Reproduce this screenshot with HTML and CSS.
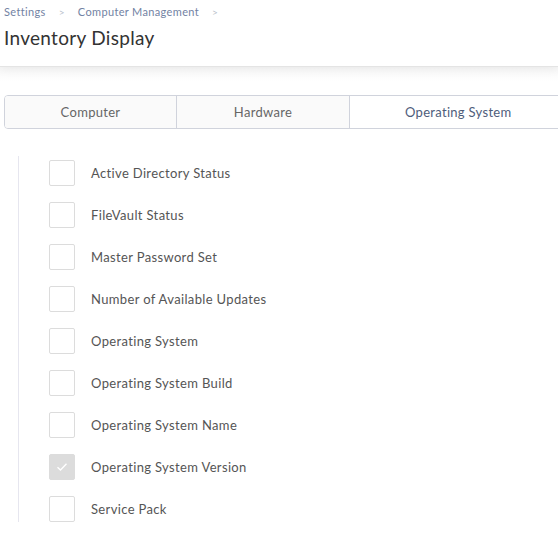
FILE: index.html
```html
<!DOCTYPE html>
<html>
<head>
<meta charset="utf-8">
<link rel="stylesheet" href="styles.css">
</head>
<body>
<header class="page-header">
  <nav class="crumbs">
    <span class="crumb">Settings</span>
    <span class="sep">&gt;</span>
    <span class="crumb">Computer Management</span>
    <span class="sep">&gt;</span>
  </nav>
  <h1 class="title">Inventory Display</h1>
</header>
<main class="content">
  <div class="tabs">
    <div class="tab">Computer</div>
    <div class="tab">Hardware</div>
    <div class="tab active">Operating System</div>
  </div>
  <ul class="list">
    <li class="row"><span class="box"></span><span class="label">Active Directory Status</span></li>
    <li class="row"><span class="box"></span><span class="label">FileVault Status</span></li>
    <li class="row"><span class="box"></span><span class="label">Master Password Set</span></li>
    <li class="row"><span class="box"></span><span class="label">Number of Available Updates</span></li>
    <li class="row"><span class="box"></span><span class="label">Operating System</span></li>
    <li class="row"><span class="box"></span><span class="label">Operating System Build</span></li>
    <li class="row"><span class="box"></span><span class="label">Operating System Name</span></li>
    <li class="row"><span class="box checked"><svg width="12" height="10" viewBox="0 0 12 10"><path d="M1.5 5.2 L4.5 8 L10.5 1.8" fill="none" stroke="#fff" stroke-width="1.4"/></svg></span><span class="label">Operating System Version</span></li>
    <li class="row"><span class="box"></span><span class="label">Service Pack</span></li>
  </ul>
</main>
</body>
</html>
```
FILE: styles.css
```css
html, body {
  margin: 0;
  padding: 0;
  background: #fff;
  font-family: "Lato", "Open Sans", sans-serif;
  overflow: hidden;
}
.page-header {
  height: 67px;
  box-sizing: border-box;
  padding: 5px 4px 0;
  border-bottom: 1px solid #e4e4e4;
  box-shadow: 0 2px 10px rgba(0,0,0,0.06);
  position: relative;
  z-index: 1;
  background: #fff;
}
.crumbs {
  display: flex;
  align-items: center;
  font-size: 11px;
  line-height: 14px;
  color: #7282a3;
  letter-spacing: 0.35px;
}
.sep {
  color: #b8bfcc;
  margin: 0 13px 0 13px;
  font-size: 10px;
}
.title {
  margin: 7px 0 0;
  font-size: 19px;
  font-weight: 400;
  color: #333;
  line-height: 24px;
  letter-spacing: 0.3px;
}
.content {
  padding: 28px 0 24px 4px;
  background: linear-gradient(#f7f7f7, #fff 14px);
  overflow: hidden;
}
.tabs {
  display: flex;
  width: 600px;
  height: 34px;
  border: 1px solid #d0d3dc;
  border-radius: 4px;
  box-sizing: border-box;
  overflow: hidden;
}
.tab {
  width: 172px;
  flex: none;
  display: flex;
  align-items: center;
  justify-content: center;
  font-size: 13px;
  color: #666;
  background: #fafafa;
  border-right: 1px solid #d0d3dc;
  letter-spacing: 0.3px;
}
.tab:first-child {
  width: 171px;
}
.tab.active {
  flex: 1;
  background: #fff;
  color: #4e5d7b;
  border-right: none;
  justify-content: flex-start;
  padding-left: 55px;
}
.list {
  list-style: none;
  margin: 27px 0 0 14px;
  padding: 4px 0 0 30px;
  border-left: 1px solid #e6e6ef;
  width: 400px;
  box-sizing: border-box;
}
.row {
  display: flex;
  align-items: center;
  height: 26px;
  margin-bottom: 16px;
}
.row:last-child {
  margin-bottom: 0;
}
.box {
  width: 26px;
  height: 26px;
  box-sizing: border-box;
  border: 1px solid #dcdcdc;
  border-radius: 2px;
  background: #fff;
  display: flex;
  align-items: center;
  justify-content: center;
  flex: none;
}
.box.checked {
  background: #dcdcdc;
  border-color: #dcdcdc;
}
.label {
  margin-left: 16px;
  font-size: 13px;
  color: #555;
  letter-spacing: 0.35px;
}
```
